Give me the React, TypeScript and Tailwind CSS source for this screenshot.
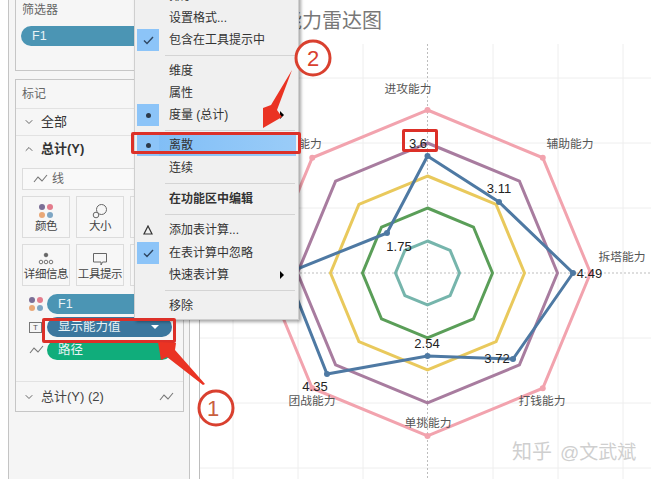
import React from "react";
import { ChevronDown, ChevronUp } from "lucide-react";

const cjk = { fontFamily: '"Liberation Sans","Noto Sans CJK SC",sans-serif' };
const C = [427.5, 273] as const;
const dirs = [[0, -1], [0.7071, -0.7071], [1, 0], [0.7071, 0.7071], [0, 1], [-0.7071, 0.7071], [-1, 0], [-0.7071, -0.7071]];
const ring = (r: number) => dirs.map(([x, y]) => `${C[0] + x * r},${C[1] + y * r}`).join(" ");
const blue: [number, number][] = [[427.5, 156], [499, 202], [573, 273], [513, 359], [427.5, 356], [327, 374], [287, 273], [387, 233]];

function LineIcon({ className = "" }: { className?: string }) {
  return (
    <svg width="15" height="10" viewBox="0 0 15 10" className={className} fill="none" stroke="#777" strokeWidth="1.1">
      <path d="M1 8 L5 3 L9 7 L14 1" />
    </svg>
  );
}

function Tile({ label, icon }: { label: string; icon: React.ReactNode }) {
  return (
    <div className="w-[48px] h-[42px] shrink-0 border border-[#dcdcdc] bg-[#f7f7f7] flex flex-col items-center justify-between pt-[5px] pb-[3px] text-[11.5px] leading-[15px] text-[#444] whitespace-nowrap">
      <div className="h-[18px] flex items-center">{icon}</div>
      <span className="tracking-[-0.4px]">{label}</span>
    </div>
  );
}

const Dots = ({ s = 6 }: { s?: number }) => (
  <svg width="16" height="16" viewBox="0 0 16 16">
    <circle cx="4" cy="4" r={s / 2} fill="#7b6f96" />
    <circle cx="12" cy="4" r={s / 2} fill="#e37c8c" />
    <circle cx="4" cy="12" r={s / 2} fill="#e9a877" />
    <circle cx="12" cy="12" r={s / 2} fill="#7ea6c4" />
  </svg>
);

function Pill({ color, text, arrow }: { color: string; text: string; arrow?: boolean }) {
  return (
    <div className={`h-[20px] w-[125px] rounded-full ${color} flex items-center justify-between pl-[11px] pr-[13px] text-[12.5px] text-[#e9f3f6]`}>
      <span>{text}</span>
      {arrow && <span className="w-0 h-0 border-x-[4px] border-x-transparent border-t-[4px] border-t-white" />}
    </div>
  );
}

type Item = { t: string; mark?: "dot" | "check" | "delta"; on?: boolean; bold?: boolean; sub?: boolean; hi?: boolean };
const Row = ({ t, mark, on, bold, sub, hi }: Item) => (
  <div className={`h-[22px] relative flex items-center mx-[2px] ${hi ? "bg-gradient-to-r from-[#7dbcf6] to-[#9accf8]" : ""}`}>
    <div className={`w-[22px] h-[22px] flex items-center justify-center ${on ? "bg-[#8cc4f8]" : ""}`}>
      {mark === "dot" && <span className="w-[5px] h-[5px] rounded-full bg-[#2d3a4a]" />}
      {mark === "check" && (
        <svg width="11" height="9" viewBox="0 0 11 9" fill="none" stroke="#2f4763" strokeWidth="1.4"><path d="M1 4.5 L4 7.5 L10 1" /></svg>
      )}
      {mark === "delta" && (
        <svg width="10" height="10" viewBox="0 0 10 10" fill="none" stroke="#333" strokeWidth="1.2"><path d="M5 1 L9 9 L1 9 Z" /></svg>
      )}
    </div>
    <span className={`ml-[10px] text-[12px] text-[#333] whitespace-nowrap ${bold ? "font-bold" : ""}`}>{t}</span>
    {sub && <span className="absolute right-[12px] w-0 h-0 border-y-[4px] border-y-transparent border-l-[4px] border-l-black" />}
  </div>
);
const Sep = ({ tall }: { tall?: boolean }) => (
  <div className={`flex items-center ml-[30px] mr-[3px] ${tall ? "h-[9px]" : "h-[8px]"}`}>
    <div className="h-px w-full bg-[#d4d4d4]" />
  </div>
);

const Lbl = ({ x, y, t }: { x: number; y: number; t: string }) => (
  <text x={x} y={y} textAnchor="middle" fontSize="11.75" fill="#555" style={cjk}>{t}</text>
);
const Val = ({ x, y, t }: { x: number; y: number; t: string }) => (
  <text x={x} y={y} textAnchor="middle" fontSize="13" fill="#222" style={cjk}>{t}</text>
);

export default function App() {
  const h = [78, 143, 208, 338, 403, 468];
  const v = [233, 298, 363, 493, 558, 623];
  return (
    <div className="relative w-[651px] h-[479px] overflow-hidden bg-white flex" style={cjk}>
      <div className="w-[8px] shrink-0" />
      {/* side panel */}
      <div className="w-[182px] h-full shrink-0 bg-[#f5f5f5] border-x border-[#c4c4c4] pl-[6px] pr-[5px] flex flex-col gap-[8px]">
        <div className="h-[72px] -mt-[1px] border border-[#c6c6c6] border-t-0 bg-[#f6f6f6] pt-[3px] pl-[5px]">
          <div className="text-[12px] leading-[16px] text-[#666] pl-[1px]">筛选器</div>
          <div className="mt-[8px] h-[20px] rounded-full bg-[#4b95b4] w-[150px] pl-[11px] text-[12.5px] leading-[20px] text-[#e9f3f6]">F1</div>
        </div>
        <div className="h-[333px] border border-[#c6c6c6] bg-[#f6f6f6] flex flex-col">
          <div className="h-[29px] border-b border-[#e2e2e2] pl-[6px] text-[12px] leading-[29px] text-[#666]">标记</div>
          <div className="h-[27px] border-b border-[#e2e2e2] flex items-center pl-[7px] gap-[6px] text-[13px] text-[#333]">
            <ChevronDown size={12} color="#666" />全部
          </div>
          <div className="h-[26px] flex items-center pl-[7px] gap-[6px] text-[13px] font-bold text-[#333]">
            <ChevronUp size={12} color="#666" />总计(Y)
          </div>
          <div className="mt-[6px] mx-[6px] h-[22px] border border-[#dcdcdc] bg-[#f9f9f9] flex items-center pl-[10px] gap-[4px] text-[12px] text-[#666]">
            <LineIcon />线
          </div>
          <div className="mt-[6px] pl-[6px] flex gap-[6px]">
            <Tile label="颜色" icon={<Dots />} />
            <Tile label="大小" icon={
              <svg width="16" height="16" viewBox="0 0 16 16" fill="none" stroke="#666"><circle cx="9.5" cy="6.5" r="5" /><circle cx="4" cy="12" r="2.8" fill="#f7f7f7" /></svg>
            } />
            <Tile label="" icon={null} />
          </div>
          <div className="mt-[6px] pl-[6px] flex gap-[6px]">
            <Tile label="详细信息" icon={
              <svg width="16" height="14" viewBox="0 0 16 14" fill="none" stroke="#666" strokeWidth="0.9"><circle cx="8" cy="3" r="1.8" fill="#666" /><circle cx="3" cy="10" r="1.8" /><circle cx="8" cy="10" r="1.8" /><circle cx="13" cy="10" r="1.8" /></svg>
            } />
            <Tile label="工具提示" icon={
              <svg width="16" height="16" viewBox="0 0 16 16" fill="none" stroke="#666"><path d="M1.5 2.5 H14.5 V11 H10.5 L9 14 V11 H1.5 Z" /></svg>
            } />
            <Tile label="" icon={null} />
          </div>
          <div className="mt-[8px] flex flex-col gap-[3px]">
            <div className="flex items-center pl-[12px] gap-[3px]"><Dots s={6} /><Pill color="bg-[#4b95b4]" text="F1" /></div>
            <div className="flex items-center pl-[13px] gap-[5px]">
              <span className="w-[13px] h-[11px] border border-[#777] text-[8px] leading-[9px] text-center text-[#555]">T</span>
              <Pill color="bg-[#3b779e]" text="显示能力值" arrow />
            </div>
            <div className="flex items-center pl-[13px] gap-[3px]"><LineIcon /><Pill color="bg-[#10ad7b]" text="路径" /></div>
          </div>
          <div className="mt-[21px] border-t border-[#e2e2e2] flex-1 flex items-center justify-between pl-[7px] pr-[9px] text-[13px] text-[#444]">
            <span className="flex items-center gap-[6px]"><ChevronDown size={12} color="#666" />总计(Y) (2)</span>
            <LineIcon />
          </div>
        </div>
      </div>
      <div className="w-[9px] shrink-0" />
      {/* view */}
      <div className="flex-1 border-l border-[#bdbdbd] flex flex-col min-w-0">
        <div className="h-[44px] shrink-0 pl-[82px] pt-[6px] text-[20px] leading-[30px] text-[#777] whitespace-nowrap">能力雷达图</div>
        <svg width="451" height="435" viewBox="200 44 451 435" className="shrink-0">
          {h.map((y) => <line key={y} x1="200" x2="651" y1={y} y2={y} stroke="#eeeeee" />)}
          {v.map((x) => <line key={x} x1={x} x2={x} y1="44" y2="479" stroke="#eeeeee" />)}
          <line x1="200" x2="651" y1="273" y2="273" stroke="#bdbdbd" strokeDasharray="2 2" />
          <line x1="427.5" x2="427.5" y1="44" y2="479" stroke="#bdbdbd" strokeDasharray="2 2" />
          <polygon points={ring(163)} fill="none" stroke="#f2a3ae" strokeWidth="3" />
          <polygon points={ring(130)} fill="none" stroke="#a87c9f" strokeWidth="3" />
          <polygon points={ring(97)} fill="none" stroke="#e9c95c" strokeWidth="3" />
          <polygon points={ring(65)} fill="none" stroke="#5a9e58" strokeWidth="3" />
          <polygon points={ring(32)} fill="none" stroke="#76b5ac" strokeWidth="3" />
          {dirs.map(([x, y], i) => <circle key={i} cx={C[0] + x * 163} cy={C[1] + y * 163} r="3" fill="#f2a3ae" />)}
          <polygon points={blue.map((p) => p.join(",")).join(" ")} fill="none" stroke="#4e79a3" strokeWidth="3" />
          {blue.map((p, i) => <circle key={i} cx={p[0]} cy={p[1]} r="3" fill="#4e79a3" />)}
          <Lbl x={408} y={93} t="进攻能力" />
          <Lbl x={570} y={148} t="辅助能力" />
          <Lbl x={622} y={261} t="拆塔能力" />
          <Lbl x={542} y={405} t="打钱能力" />
          <Lbl x={428} y={427} t="单挑能力" />
          <Lbl x={312} y={405} t="团战能力" />
          <Lbl x={310} y={148} t="能力" />
          <Val x={418} y={148} t="3.6" />
          <Val x={499} y={193} t="3.11" />
          <Val x={399} y={251} t="1.75" />
          <Val x={589.5} y={278} t="4.49" />
          <Val x={497} y={363} t="3.72" />
          <Val x={427} y={348} t="2.54" />
          <Val x={315} y={391} t="4.35" />
          <text x="512" y="459" fontSize="20" fill="#cfcfcf" style={cjk}>知乎</text>
          <text x="560" y="459" fontSize="19" fill="#cfcfcf" style={cjk}>@文武斌</text>
        </svg>
      </div>

      {/* context menu */}
      <div className="absolute left-[134px] top-[-16px] w-[165px] bg-[#f0f0f0] border border-[#cfcfcf] shadow-[2px_2px_3px_rgba(0,0,0,0.35)] flex flex-col pb-[2px]">
        <Row t="排序" mark="dot" />
        <Row t="设置格式..." />
        <Row t="包含在工具提示中" mark="check" on />
        <Sep tall />
        <Row t="维度" />
        <Row t="属性" />
        <Row t="度量 (总计)" mark="dot" on sub />
        <Sep />
        <Row t="离散" mark="dot" on hi />
        <div className="h-px" />
        <Row t="连续" />
        <Sep tall />
        <Row t="在功能区中编辑" bold />
        <Sep tall />
        <Row t="添加表计算..." mark="delta" />
        <div className="h-px" />
        <Row t="在表计算中忽略" mark="check" on />
        <Row t="快速表计算" sub />
        <Sep tall />
        <Row t="移除" />
      </div>

      {/* annotations */}
      <div className="absolute left-[42px] top-[318px] w-[134px] h-[25px] border-[3px] border-[#dc3028] rounded-[2px]" />
      <div className="absolute left-[131px] top-[132px] w-[170px] h-[22px] border-[3px] border-[#dc3028] rounded-[2px]" />
      <div className="absolute left-[402px] top-[129px] w-[36px] h-[23px] border-[3px] border-[#dc3028] rounded-[2px]" />
      <svg className="absolute left-0 top-0 pointer-events-none" width="651" height="479" viewBox="0 0 651 479">
        <path d="M158 342 L176 343 L175 350 L205 384 L203 385 L167 357 L161 360 Z" fill="#ea3323" />
        <path d="M292 70 L277 110 L282 117 L263 128 L263 108 L271 105 Z" fill="#ea3323" />
        <circle cx="216" cy="408" r="17" fill="#fff" stroke="#d9402f" strokeWidth="3" />
        <circle cx="313" cy="58" r="17" fill="#fff" stroke="#d9402f" strokeWidth="3" />
        <text x="213" y="416" textAnchor="middle" fontSize="22" fill="#c9603f" style={cjk}>1</text>
        <text x="313" y="66" textAnchor="middle" fontSize="22" fill="#d9402f" style={cjk}>2</text>
      </svg>
    </div>
  );
}
